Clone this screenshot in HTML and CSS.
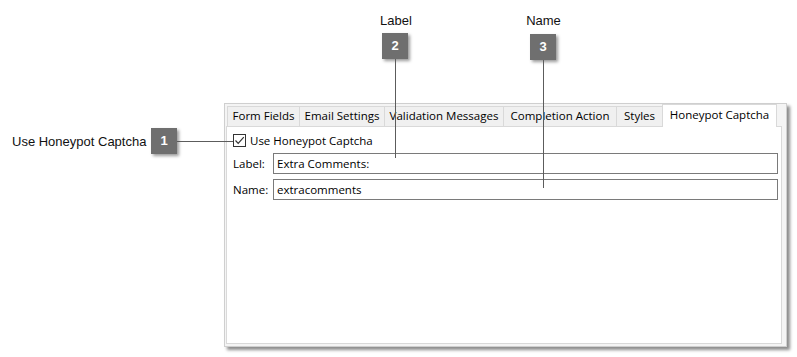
FILE: index.html
```html
<!DOCTYPE html>
<html lang="en">
<head>
    <meta charset="UTF-8">
    <meta name="viewport" content="width=device-width, initial-scale=1.0">
    <title>Honeypot Captcha</title>
    <link rel="stylesheet" href="styles.css">
</head>
<body>
  <div class="canvas">

    <div class="window">
      <div class="tabs">
        <div class="tab tab-form">Form Fields</div>
        <div class="tab tab-email">Email Settings</div>
        <div class="tab tab-valid">Validation Messages</div>
        <div class="tab tab-compl">Completion Action</div>
        <div class="tab tab-styles">Styles</div>
        <div class="tab tab-honey active">Honeypot Captcha</div>
      </div>
      <div class="panel">
        <label class="checkrow">
          <span class="checkbox">
            <svg width="11" height="11" viewBox="0 0 11 11"><path d="M1.5 5.5 L4.2 8.3 L9.8 2.2" fill="none" stroke="#333" stroke-width="1.2"/></svg>
          </span>
          Use Honeypot Captcha
        </label>
        <div class="field">
          <span class="field-label">Label:</span>
          <div class="input">Extra Comments:</div>
        </div>
        <div class="field">
          <span class="field-label">Name:</span>
          <div class="input">extracomments</div>
        </div>
      </div>
    </div>

    <!-- callouts -->
    <div class="callout-text c1-text">Use Honeypot Captcha</div>
    <div class="badge b1">1</div>
    <div class="line line1"></div>

    <div class="callout-text c2-text">Label</div>
    <div class="badge b2">2</div>
    <div class="line line2"></div>

    <div class="callout-text c3-text">Name</div>
    <div class="badge b3">3</div>
    <div class="line line3"></div>

  </div>
</body>
</html>
```

FILE: styles.css
```css
*{
  box-sizing: border-box;
}
body{
  margin: 0;
  background: #ffffff;
  font-family: "Liberation Sans", Arial, sans-serif;
}
.canvas{
  position: relative;
  width: 797px;
  height: 357px;
  overflow: hidden;
}

/* dialog window */
.window{
  position: absolute;
  left: 224px;
  top: 103px;
  width: 563px;
  height: 244px;
  background: #f4f4f4;
  border: 1px solid #cfcfcf;
  box-shadow: 3px 3px 3px rgba(0,0,0,0.45);
  padding: 0 4px 2px 1px;
  display: flex;
  flex-direction: column;
  font-family: "Open Sans", "Noto Sans", sans-serif;
  font-size: 11.5px;
  color: #000;
}
.tabs{
  display: flex;
  align-items: flex-end;
  height: 22px;
  padding-left: 1px;
}
.tab{
  height: 20px;
  line-height: 18px;
  text-align: center;
  background: #f0f0f0;
  border: 1px solid #d9d9d9;
  border-bottom: none;
  border-right: none;
  white-space: nowrap;
}
.tab.active{
  height: 23px;
  line-height: 19px;
  background: #ffffff;
  border-right: 1px solid #d9d9d9;
  position: relative;
  top: 1px;
}
.tab-form{ width: 72px; }
.tab-email{ width: 85px; }
.tab-valid{ width: 119px; }
.tab-compl{ width: 113px; }
.tab-styles{ width: 46px; }
.tab-honey{ width: 115px; }

.panel{
  flex: 1;
  background: #ffffff;
  border: 1px solid #d9d9d9;
  padding: 6px 3px 0 6px;
}
.checkrow{
  display: flex;
  align-items: center;
  gap: 4px;
  height: 15px;
  margin-bottom: 5px;
}
.checkbox{
  width: 13px;
  height: 13px;
  border: 1px solid #333;
  display: flex;
  align-items: center;
  justify-content: center;
  background: #fff;
}
.field{
  display: flex;
  align-items: center;
  margin-bottom: 5px;
}
.field-label{
  width: 40px;
}
.input{
  flex: 1;
  height: 21px;
  border: 1px solid #7a7a7a;
  padding: 0 3px;
  line-height: 19px;
  background: #fff;
}

/* callouts */
.callout-text{
  position: absolute;
  font-size: 13px;
  line-height: 15px;
  color: #111;
  white-space: nowrap;
}
.c1-text{ left: 12px; top: 134px; }
.c2-text{ left: 380px; top: 13px; width: 31px; text-align: center; }
.c3-text{ left: 526px; top: 13px; width: 35px; text-align: center; }

.badge{
  position: absolute;
  width: 26px;
  height: 26px;
  background: #6f6f6f;
  color: #fff;
  font-weight: bold;
  font-size: 13px;
  line-height: 26px;
  text-align: center;
  box-shadow: 2px 2px 3px rgba(0,0,0,0.4);
}
.b1{ left: 151px; top: 128px; }
.b2{ left: 382px; top: 33px; }
.b3{ left: 530px; top: 34px; }

.line{
  position: absolute;
  background: #5c5c5c;
}
.line1{ left: 177px; top: 141px; width: 56px; height: 1px; }
.line2{ left: 395px; top: 59px; width: 1px; height: 99px; }
.line3{ left: 543px; top: 60px; width: 1px; height: 128px; }
```
